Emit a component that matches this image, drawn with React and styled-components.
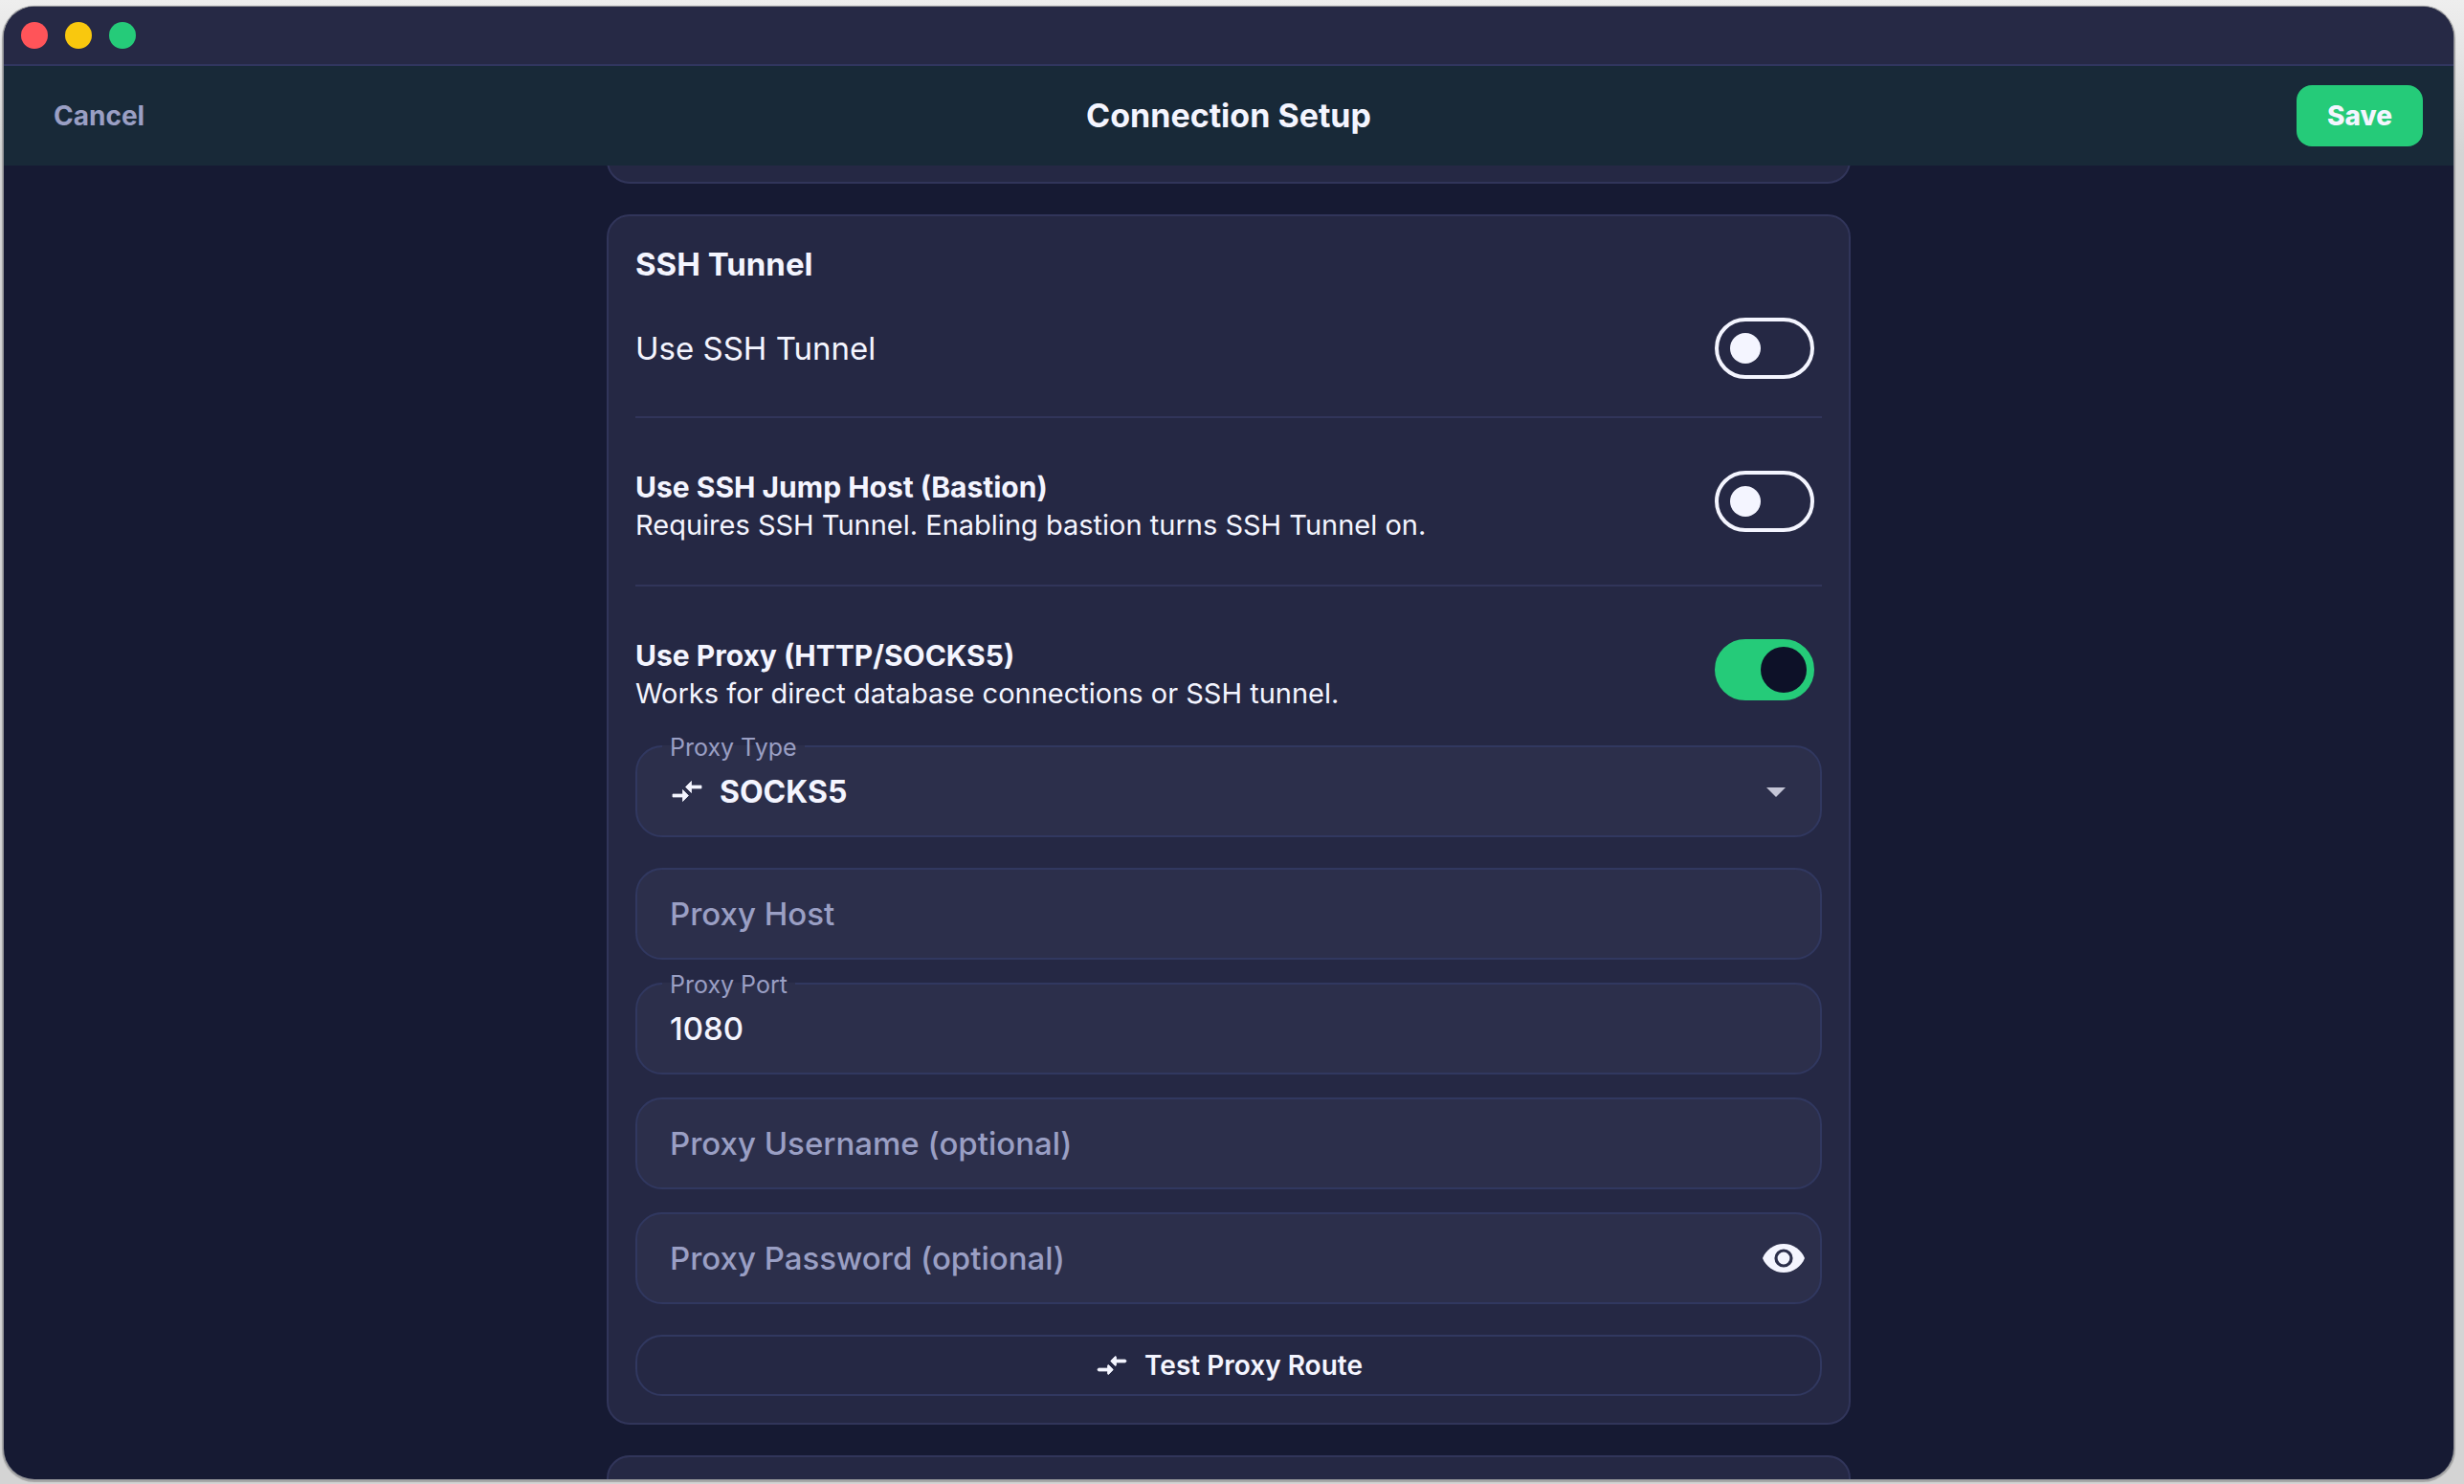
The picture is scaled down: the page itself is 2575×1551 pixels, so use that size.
import React, { useState } from "react";
import styled, { createGlobalStyle } from "styled-components";
import { MdArrowDropDown } from "react-icons/md";

const GlobalStyle = createGlobalStyle`
  * {
    box-sizing: border-box;
  }
  body {
    margin: 0;
    font-family: Inter, "Noto Sans", sans-serif;
    color: #f4f5ff;
    background: linear-gradient(#eeeeee, #d4d4d4 160px);
  }
  button, input, select {
    font-family: inherit;
    color: inherit;
  }
`;

// > window frame
const Desktop = styled.div`
  height: 100vh;
  padding: 7px 11px 5px 4px;
`;

const Window = styled.div`
  height: 100%;
  display: flex;
  flex-direction: column;
  overflow: hidden;
  border-radius: 32px;
  background: #161a33;
  box-shadow: 0 0 0 1px #8f9096, 0 1px 1px 2px #a5a5a5;
`;

const TitleBar = styled.div`
  display: flex;
  align-items: center;
  gap: 18px;
  height: 62px;
  flex-shrink: 0;
  padding: 0 18px;
  background: #262945;
  border-bottom: 2px solid #31365f;
`;

const Light = styled.span`
  width: 28px;
  height: 28px;
  border-radius: 50%;
  background: ${(props) => props.$color};
`;

const Header = styled.header`
  display: grid;
  grid-template-columns: 1fr auto 1fr;
  align-items: center;
  height: 104px;
  flex-shrink: 0;
  padding: 0 32px;
  background: #182938;
`;

const Heading = styled.h1`
  margin: 0;
  font-size: 34px;
  line-height: 40px;
  font-weight: 700;
`;

const CancelButton = styled.button`
  justify-self: start;
  height: 64px;
  padding: 0 20px;
  border: none;
  background: none;
  font-size: 28px;
  font-weight: 700;
  color: #9a9fc4;
`;

const SaveButton = styled.button`
  justify-self: end;
  height: 64px;
  padding: 0 32px;
  border: none;
  border-radius: 16px;
  background: #25cb79;
  font-size: 28px;
  font-weight: 800;
`;

// > cards
const Content = styled.main`
  flex: 1;
  min-height: 0;
  overflow: hidden;
  display: flex;
  flex-direction: column;
  align-items: center;
  gap: 32px;
`;

const Card = styled.section`
  width: 100%;
  max-width: 1300px;
  flex-shrink: 0;
  padding: 28px;
  border: 2px solid #31355a;
  border-radius: 24px;
  background: #252844;
`;

// the neighbours of the open card are cut off by the scroll area
const PreviousCard = styled(Card)`
  margin-top: -41px;
`;

const NextCard = styled(Card)`
  min-height: 120px;
`;

const CardTitle = styled.h2`
  margin: 0;
  font-size: 33px;
  line-height: 44px;
  font-weight: 700;
`;

const Divider = styled.hr`
  height: 2px;
  margin: 39px 0 52px;
  border: none;
  background: #31355a;
`;

const ToggleRow = styled.div`
  display: flex;
  justify-content: space-between;
  align-items: ${(props) => (props.$single ? "center" : "flex-start")};
  padding: ${(props) => (props.$single ? "34px 8px 0 0" : "0 8px 3px 0")};
`;

const ToggleText = styled.div`
  display: flex;
  flex-direction: column;
`;

const ToggleLabel = styled.label`
  font-size: ${(props) => (props.$plain ? 33 : 30)}px;
  line-height: 40px;
  font-weight: ${(props) => (props.$plain ? 400 : 700)};
`;

const ToggleHint = styled.span`
  font-size: 29px;
  line-height: 40px;
`;

const Switch = styled.input`
  appearance: none;
  display: flex;
  align-items: center;
  width: 104px;
  height: 64px;
  flex-shrink: 0;
  margin: ${(props) => (props.$single ? 0 : 3)}px 0 0;
  padding: 0 12px;
  border: 4px solid #f4f5ff;
  border-radius: 32px;

  &::before {
    content: "";
    width: 32px;
    height: 32px;
    border-radius: 50%;
    background: #f4f5ff;
  }

  &:checked {
    justify-content: flex-end;
    padding: 0 4px;
    border-color: #25cb79;
    background: #25cb79;
  }

  &:checked::before {
    width: 48px;
    height: 48px;
    background: #0d1128;
  }
`;

// > form fields
const Fields = styled.div`
  display: flex;
  flex-direction: column;
  gap: 24px;
  margin: 31px 0 32px;
`;

const Field = styled.div`
  position: relative;
  display: flex;
  align-items: center;
  height: 96px;
  margin-bottom: ${(props) => (props.$spaced ? 8 : 0)}px;
`;

const fieldBox = `
  width: 100%;
  height: 100%;
  border: 2px solid #313860;
  border-radius: 28px;
  background: #2c2f4b;
  outline: none;
`;

const TextInput = styled.input`
  ${fieldBox}
  padding: 0 34px;
  font-size: 33px;
  font-weight: 500;
`;

const Select = styled.select`
  ${fieldBox}
  appearance: none;
  padding: 0 80px 0 86px;
  font-size: 32px;
  font-weight: 700;
`;

const FieldLabel = styled.label`
  position: absolute;
  color: #9a9fc4;
  pointer-events: none;
  ${(props) =>
    props.$floating
      ? `
  top: -14px;
  left: 28px;
  padding: 0 8px;
  font-size: 25px;
  line-height: 32px;
  background: linear-gradient(#2c2f4b, #2c2f4b) 0 14px / 100% 2px no-repeat;`
      : `
  left: 36px;
  font-size: 33px;
  font-weight: 500;
  line-height: 40px;`}
`;

const Icon = styled.svg`
  width: 36px;
  height: 36px;
  flex-shrink: 0;
  fill: currentColor;
  stroke: currentColor;
  stroke-width: 0.5;
`;

const LeadingIcon = styled(Icon)`
  position: absolute;
  left: 36px;
  pointer-events: none;
`;

const SelectArrow = styled(MdArrowDropDown)`
  position: absolute;
  right: 24px;
  font-size: 48px;
  color: #c4c5d6;
  pointer-events: none;
`;

const EyeButton = styled.button`
  position: absolute;
  right: 16px;
  display: flex;
  padding: 0;
  border: none;
  background: none;
`;

const TestButton = styled.button`
  display: flex;
  justify-content: center;
  align-items: center;
  gap: 16px;
  width: 100%;
  height: 64px;
  padding: 0;
  border: 2px solid #313860;
  border-radius: 28px;
  background: none;
  font-size: 28px;
  font-weight: 600;
`;

const EyeIcon = () => (
  <svg width="48" height="48" viewBox="0 0 24 24" aria-hidden="true">
    <path
      fill="#f4f5ff"
      d="M12 4.5C7 4.5 2.73 7.61 1 12c1.73 4.39 6 7.5 11 7.5s9.27-3.11 11-7.5c-1.73-4.39-6-7.5-11-7.5z"
    />
    <circle cx="12" cy="12" r="4" fill="none" stroke="#2c2f4b" strokeWidth="1.6" />
  </svg>
);

// square ends in the select, rounded ends on the button
const ArrowsIcon = () => (
  <LeadingIcon viewBox="0 0 24 24" aria-hidden="true">
    <path d="M9.01 14H2v2h7.01v3L13 15l-3.99-4v3zm5.98-1v-3H22V8h-7.01V5L11 9l3.99 4z" />
  </LeadingIcon>
);

const RouteIcon = () => (
  <Icon viewBox="0 0 24 24" aria-hidden="true">
    <path d="M9.01 14H3c-.55 0-1 .45-1 1s.45 1 1 1h6.01v1.79c0 .45.54.67.85.35l2.78-2.79c.19-.2.19-.51 0-.71l-2.78-2.79c-.31-.32-.85-.09-.85.35V14zm5.98-2.21V10H21c.55 0 1-.45 1-1s-.45-1-1-1h-6.01V6.21c0-.45-.54-.67-.85-.35l-2.78 2.79c-.19.2-.19.51 0 .71l2.78 2.79c.31.31.85.09.85-.36z" />
  </Icon>
);

const Toggle = ({ id, label, hint, checked, onChange }) => (
  <ToggleRow $single={!hint}>
    <ToggleText>
      <ToggleLabel htmlFor={id} $plain={!hint}>
        {label}
      </ToggleLabel>
      {hint && <ToggleHint>{hint}</ToggleHint>}
    </ToggleText>
    <Switch
      id={id}
      type="checkbox"
      role="switch"
      $single={!hint}
      checked={checked}
      onChange={(e) => onChange(e.target.checked)}
    />
  </ToggleRow>
);

const TextField = ({ id, label, type = "text", value, onChange, children }) => (
  <Field>
    <TextInput
      id={id}
      type={type}
      value={value}
      onChange={(e) => onChange(e.target.value)}
    />
    <FieldLabel htmlFor={id} $floating={value !== ""}>
      {label}
    </FieldLabel>
    {children}
  </Field>
);

function App() {
  const [tunnel, setTunnel] = useState(false);
  const [bastion, setBastion] = useState(false);
  const [proxy, setProxy] = useState(true);
  const [proxyType, setProxyType] = useState("SOCKS5");
  const [host, setHost] = useState("");
  const [port, setPort] = useState("1080");
  const [username, setUsername] = useState("");
  const [password, setPassword] = useState("");
  const [visible, setVisible] = useState(false);

  // bastion needs the tunnel
  const changeBastion = (on) => {
    setBastion(on);
    if (on) setTunnel(true);
  };

  return (
    <>
      <GlobalStyle />
      <Desktop>
        <Window>
          <TitleBar>
            <Light $color="#ff5459" />
            <Light $color="#f9c80e" />
            <Light $color="#25cb79" />
          </TitleBar>
          <Header>
            <CancelButton>Cancel</CancelButton>
            <Heading>Connection Setup</Heading>
            <SaveButton>Save</SaveButton>
          </Header>
          <Content>
            <PreviousCard />
            <Card>
              <CardTitle>SSH Tunnel</CardTitle>
              <Toggle
                id="tunnel"
                label="Use SSH Tunnel"
                checked={tunnel}
                onChange={setTunnel}
              />
              <Divider />
              <Toggle
                id="bastion"
                label="Use SSH Jump Host (Bastion)"
                hint="Requires SSH Tunnel. Enabling bastion turns SSH Tunnel on."
                checked={bastion}
                onChange={changeBastion}
              />
              <Divider />
              <Toggle
                id="proxy"
                label="Use Proxy (HTTP/SOCKS5)"
                hint="Works for direct database connections or SSH tunnel."
                checked={proxy}
                onChange={setProxy}
              />
              {proxy && (
                <>
                  <Fields>
                    <Field $spaced>
                      <Select
                        id="proxyType"
                        value={proxyType}
                        onChange={(e) => setProxyType(e.target.value)}
                      >
                        <option>SOCKS5</option>
                        <option>HTTP</option>
                      </Select>
                      <FieldLabel htmlFor="proxyType" $floating>
                        Proxy Type
                      </FieldLabel>
                      <ArrowsIcon />
                      <SelectArrow />
                    </Field>
                    <TextField id="host" label="Proxy Host" value={host} onChange={setHost} />
                    <TextField id="port" label="Proxy Port" value={port} onChange={setPort} />
                    <TextField
                      id="username"
                      label="Proxy Username (optional)"
                      value={username}
                      onChange={setUsername}
                    />
                    <TextField
                      id="password"
                      label="Proxy Password (optional)"
                      type={visible ? "text" : "password"}
                      value={password}
                      onChange={setPassword}
                    >
                      <EyeButton
                        type="button"
                        aria-label="Show password"
                        onClick={() => setVisible(!visible)}
                      >
                        <EyeIcon />
                      </EyeButton>
                    </TextField>
                  </Fields>
                  <TestButton type="button">
                    <RouteIcon />
                    Test Proxy Route
                  </TestButton>
                </>
              )}
            </Card>
            <NextCard />
          </Content>
        </Window>
      </Desktop>
    </>
  );
}

export default App;
